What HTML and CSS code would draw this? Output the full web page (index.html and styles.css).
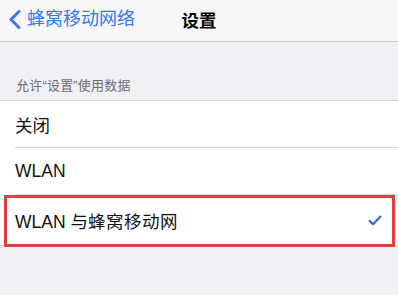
FILE: index.html
```html
<!DOCTYPE html>
<html lang="zh-CN">
<head>
<meta charset="utf-8">
<link rel="stylesheet" href="styles.css">
</head>
<body>
<header class="nav">
  <div class="back">
    <svg class="chev" width="13" height="19" viewBox="0 0 13 19"><path d="M11 1.5 L3 9.5 L11 17.5" fill="none" stroke="#3478f6" stroke-width="3" stroke-linecap="round" stroke-linejoin="round"/></svg>
    <span class="back-text">蜂窝移动网络</span>
  </div>
  <div class="title">设置</div>
  <div></div>
</header>
<div class="section-head">允许“设置”使用数据</div>
<ul class="list">
  <li class="row"><span class="label">关闭</span></li>
  <li class="row"><span class="label">WLAN</span></li>
  <li class="row row-last">
    <span class="label">WLAN 与<span class="wide">蜂窝移动网</span></span>
    <svg class="check" width="14" height="11" viewBox="0 0 14 11"><path d="M1.5 5.8 L5 9.2 L12.5 1.5" fill="none" stroke="#2f66d6" stroke-width="2" stroke-linecap="round" stroke-linejoin="round"/></svg>
    <div class="highlight"></div>
  </li>
</ul>
</body>
</html>
```
FILE: styles.css
```css
* { box-sizing: border-box; }
html, body {
  margin: 0;
  padding: 0;
  background: #efeff4;
  font-family: "Liberation Sans", "Noto Sans CJK SC", sans-serif;
  width: 398px;
  height: 295px;
  overflow: hidden;
}
.nav {
  height: 42px;
  background: #f7f7f7;
  border-bottom: 1px solid #c8c7cc;
  display: grid;
  grid-template-columns: 1fr auto 1fr;
  align-items: center;
}
.back {
  display: flex;
  align-items: center;
  padding-left: 8px;
  gap: 6px;
  margin-top: -3px;
}
.chev { display: block; }
.back-text {
  color: #3478f6;
  font-size: 18px;
  line-height: 20px;
}
.title {
  font-size: 17.5px;
  font-weight: bold;
  color: #000;
  margin-top: -3px;
}
.section-head {
  height: 58px;
  padding: 36px 0 6px 16px;
  font-size: 13px;
  line-height: 16px;
  color: #6d6d72;
  letter-spacing: 0.2px;
}
.list {
  list-style: none;
  margin: 0;
  padding: 0;
  background: #fff;
  border-top: 1px solid #d6d6da;
  border-bottom: 1px solid #d6d6da;
}
.row {
  position: relative;
  height: 47px;
  display: flex;
  align-items: center;
  padding-left: 15px;
  padding-right: 16px;
}
.row::after {
  content: "";
  position: absolute;
  left: 15px;
  right: 0;
  bottom: 0;
  height: 1px;
  background: #d6d6da;
}
.row-last { height: 50px; }
.row-last::after { display: none; }
.label {
  flex: 1;
  font-size: 17.5px;
  color: #111;
}
.wide { letter-spacing: 0.5px; }
.check { display: block; }
.highlight {
  position: absolute;
  top: 0;
  left: 4px;
  right: 3px;
  height: 52px;
  border: 3px solid #e43d40;
}
```
